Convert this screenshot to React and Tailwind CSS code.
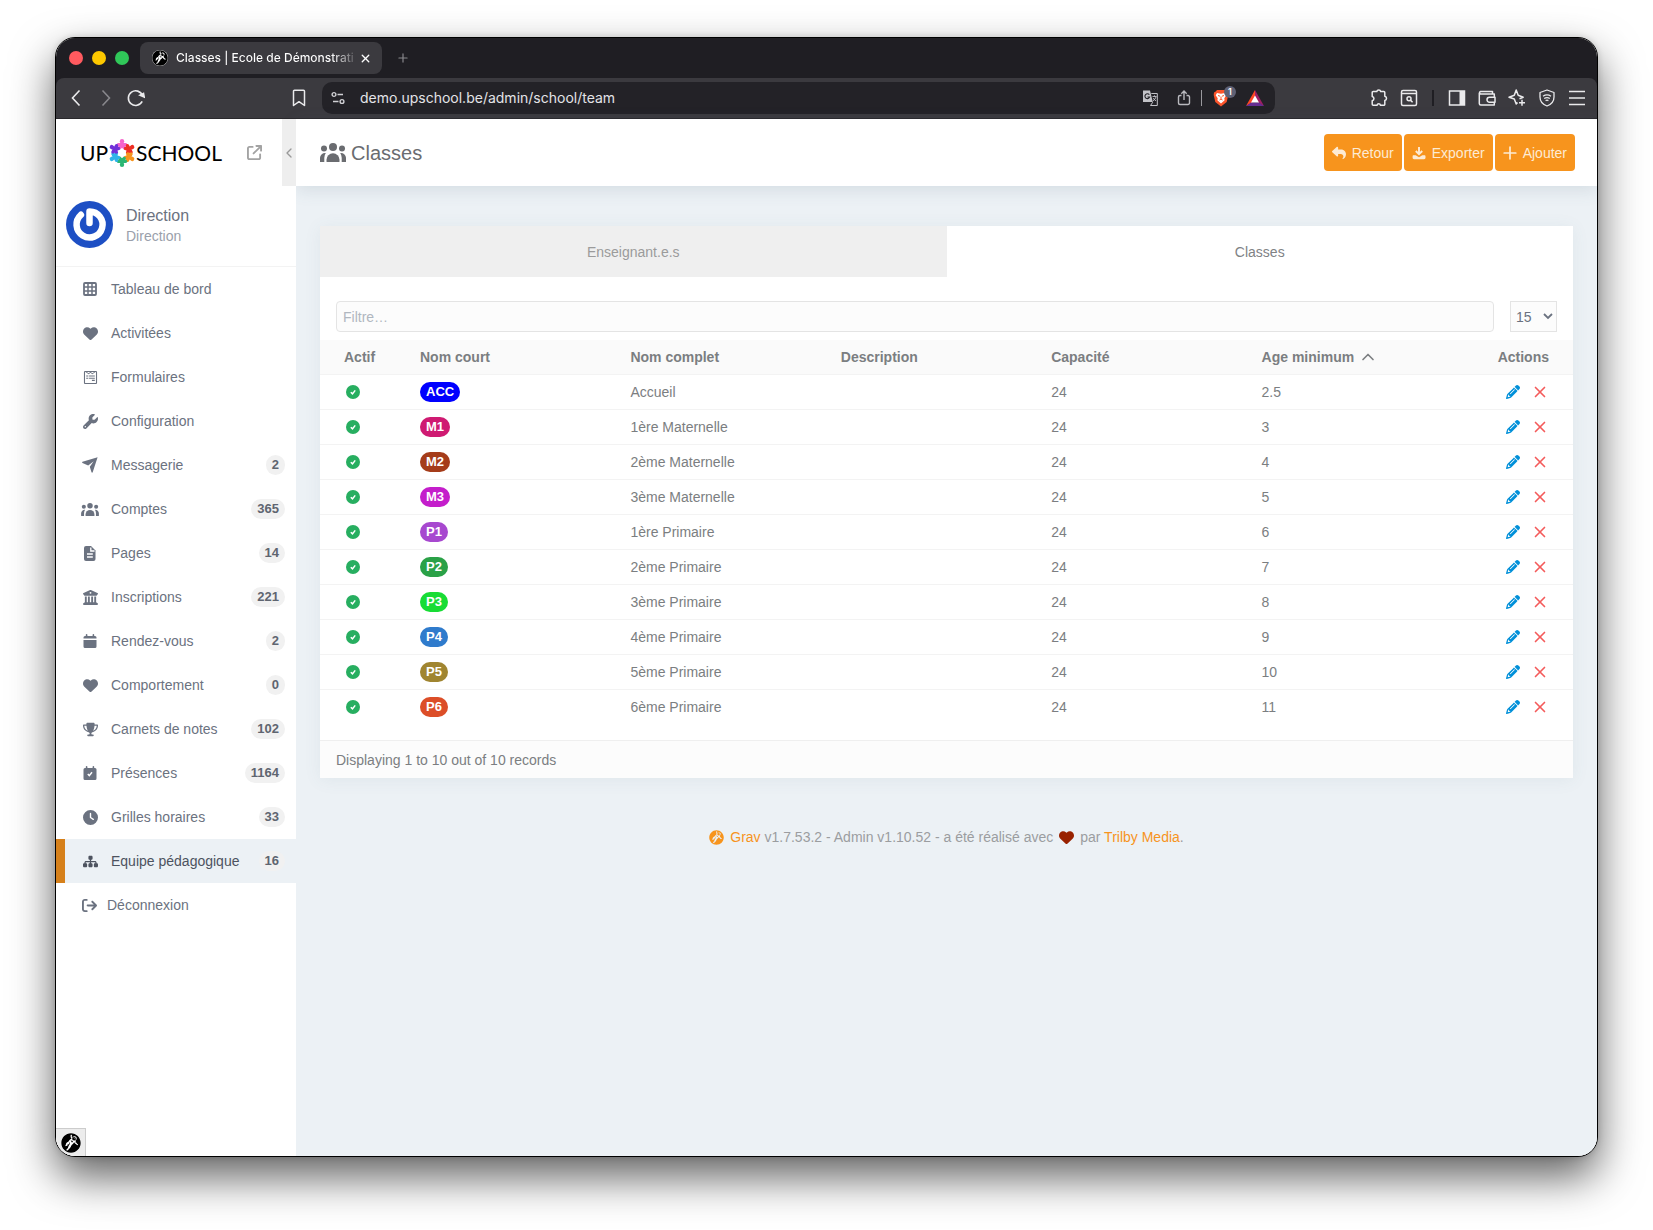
import {
  FaArrowRightFromBracket, FaArrowUpRightFromSquare, FaBuildingColumns, FaClock,
  FaGrav, FaHeart, FaPencil, FaReply, FaSitemap, FaTrophy, FaWpforms, FaWrench,
} from 'react-icons/fa6'
import { ChevronLeft, ChevronUp, Plus, X } from 'lucide-react'

const GridIcon = () => (
  <svg viewBox="0 0 14 14" className="size-3.5" fill="none" stroke="currentColor">
    <rect x="1" y="1" width="12" height="12" rx="1" strokeWidth="1.8" />
    <path d="M5 1v12M9 1v12M1 5h12M1 9h12" strokeWidth="1.5" />
  </svg>
)

const SendIcon = () => (
  <svg viewBox="0 0 16 16" className="size-4" fill="currentColor">
    <path d="M15.600.2.5 4.700c-.6.2-.6.900 0 1.200l5.700 2.600L11.700 4.200 7.800 9.700l1.700 5.600c.2.6 1 .6 1.200 0z" />
  </svg>
)

function GroupIcon({ className }) {
  return (
    <svg viewBox="0 0 26 19" className={className} fill="currentColor">
      <circle cx="13" cy="4" r="4" />
      <circle cx="4" cy="5.500" r="3" />
      <circle cx="22" cy="5.500" r="3" />
      <path d="M6.500 18.500v-1.700a6.500 6.500 0 0 1 13 0v1.700a.5.5 0 0 1-.5.500H7a.5.5 0 0 1-.5-.5z" />
      <path d="M0 18.500V15a5 5 0 0 1 5.800-5 8.500 8.500 0 0 0-1.500 5v4H.5a.5.5 0 0 1-.5-.5z" />
      <path d="M26 18.500V15a5 5 0 0 0-5.800-5 8.500 8.500 0 0 1 1.500 5v4h3.800a.5.5 0 0 0 .5-.5z" />
    </svg>
  )
}

const PageIcon = () => (
  <svg viewBox="0 0 12 15" className="h-[15px] w-3">
    <path d="M2 0h5l4.500 4.500V13a2 2 0 0 1-2 2H2a2 2 0 0 1-2-2V2a2 2 0 0 1 2-2z" fill="currentColor" />
    <path d="M6.800 1.500V5h3.700M3 8h5.800M3 11h5.800" fill="none" stroke="#fff" strokeWidth="1.3" />
  </svg>
)

const CalendarIcon = () => (
  <svg viewBox="0 0 14 14" className="size-3.5" fill="currentColor">
    <path d="M2.800.8a.8.8 0 0 1 1.600 0V2h5.200V.8a.8.8 0 0 1 1.600 0V2H12a1.500 1.500 0 0 1 1.500 1.500v1H.5v-1A1.500 1.500 0 0 1 2 2h.8z" />
    <path d="M.5 6h13v6.500A1.500 1.500 0 0 1 12 14H2a1.500 1.500 0 0 1-1.500-1.500z" />
  </svg>
)

const CalendarCheckIcon = () => (
  <svg viewBox="0 0 14 14" className="size-3.5">
    <path fill="currentColor" d="M2.800.8a.8.8 0 0 1 1.600 0V2h5.200V.8a.8.8 0 0 1 1.600 0V2H12a1.500 1.500 0 0 1 1.500 1.500v9A1.500 1.500 0 0 1 12 14H2a1.500 1.500 0 0 1-1.500-1.500v-9A1.500 1.500 0 0 1 2 2h.8z" />
    <path d="m4.800 8 1.500 1.600 2.700-3.400" fill="none" stroke="#fff" strokeWidth="1.5" />
  </svg>
)

const CheckIcon = () => (
  <svg viewBox="0 0 14 14" className="size-3.5" role="img" aria-label="Actif">
    <circle cx="7" cy="7" r="7" fill="#27ae60" />
    <path d="m4.800 7.200 1.700 1.700 2.700-3.500" fill="none" stroke="#fff" strokeWidth="1.5" />
  </svg>
)

const DownloadIcon = () => (
  <svg viewBox="0 0 14 14" className="size-3.5">
    <path d="M7 1v6.500M3.800 5 7 8.200 10.200 5" fill="none" stroke="currentColor" strokeWidth="1.900" />
    <path d="M1.500 9.200h2.200L7 11.200l3.300-2h2.200c.7 0 1 .5 1 1.200v1.400c0 .8-.6 1.400-1.400 1.400H2c-.8 0-1.400-.6-1.400-1.400v-1.400c0-.7.3-1.200.9-1.200z" fill="currentColor" />
  </svg>
)

const PlusIcon = () => (
  <svg viewBox="0 0 14 14" className="size-3.5" fill="none" stroke="currentColor" strokeWidth="1.700" strokeLinecap="round">
    <path d="M7 1.200v11.600M1.200 7h11.600" />
  </svg>
)

const navItems = [
  { label: 'Tableau de bord', icon: <GridIcon /> },
  { label: 'Activitées', icon: <FaHeart size={15} /> },
  { label: 'Formulaires', icon: <FaWpforms size={15} /> },
  { label: 'Configuration', icon: <FaWrench size={15} /> },
  { label: 'Messagerie', icon: <SendIcon />, count: 2 },
  { label: 'Comptes', icon: <GroupIcon className="h-[13px] w-[18px]" />, count: 365 },
  { label: 'Pages', icon: <PageIcon />, count: 14 },
  { label: 'Inscriptions', icon: <FaBuildingColumns size={15} />, count: 221 },
  { label: 'Rendez-vous', icon: <CalendarIcon />, count: 2 },
  { label: 'Comportement', icon: <FaHeart size={15} />, count: 0 },
  { label: 'Carnets de notes', icon: <FaTrophy size={15} />, count: 102 },
  { label: 'Présences', icon: <CalendarCheckIcon />, count: 1164 },
  { label: 'Grilles horaires', icon: <FaClock size={15} />, count: 33 },
  { label: 'Equipe pédagogique', icon: <FaSitemap size={15} />, count: 16, active: true },
]

const classes = [
  { code: 'ACC', color: 'bg-[#0000ff]', name: 'Accueil', age: '2.5' },
  { code: 'M1', color: 'bg-[#cf1a72]', name: '1ère Maternelle', age: '3' },
  { code: 'M2', color: 'bg-[#a53c1a]', name: '2ème Maternelle', age: '4' },
  { code: 'M3', color: 'bg-[#c41ecb]', name: '3ème Maternelle', age: '5' },
  { code: 'P1', color: 'bg-[#a748cf]', name: '1ère Primaire', age: '6' },
  { code: 'P2', color: 'bg-[#2aa147]', name: '2ème Primaire', age: '7' },
  { code: 'P3', color: 'bg-[#18dc35]', name: '3ème Primaire', age: '8' },
  { code: 'P4', color: 'bg-[#2f7bcc]', name: '4ème Primaire', age: '9' },
  { code: 'P5', color: 'bg-[#a08530]', name: '5ème Primaire', age: '10' },
  { code: 'P6', color: 'bg-[#dc4e28]', name: '6ème Primaire', age: '11' },
]

// logo petals, clockwise from the top
const petals = ['#f564cb', '#ee2e24', '#f7941d', '#2bb673', '#2fb4e9', '#7030d8']

function Logo() {
  return (
    <a href="#" className="flex items-center font-[Lato,sans-serif] text-[21px] leading-7 text-black">
      <span>UP</span>
      <svg viewBox="-14 -14 28 28" className="size-7">
        {petals.map((fill, i) => (
          <g key={fill} fill={fill} transform={`rotate(${i * 60})`}>
            <circle cx="0" cy="-11.700" r="2.200" />
            <path d="M-1.300-10.500h2.600l.5.500h2.100a1.600 1.600 0 0 1 .4 3.100l-.9.400.6 1.800L1.800-3.400 0-5.200l-1.800 1.800L-4-4.700l.6-1.800-.9-.4a1.600 1.600 0 0 1 .4-3.100h2.100z" />
          </g>
        ))}
      </svg>
      <span>SCHOOL</span>
    </a>
  )
}

function Avatar() {
  return (
    <svg viewBox="0 0 47 47" className="size-[47px]">
      <circle cx="23.500" cy="23.500" r="23.500" fill="#1d4fc4" />
      <path d="M23.500 22V10.500a13 13 0 1 1-8.600 3.300" fill="none" stroke="#fff" strokeWidth="6.500" strokeLinecap="round" strokeLinejoin="round" />
    </svg>
  )
}

function ToolButton({ label, children }) {
  return (
    <button type="button" aria-label={label} className="flex h-8 w-[30px] shrink-0 items-center justify-center">
      {children}
    </button>
  )
}

function BrowserTabs() {
  return (
    <div className="flex h-10 items-center bg-[#1f1e23] pl-[13px]">
      <div className="flex gap-[9px]">
        <span className="size-3.5 rounded-full bg-[#ff5a5f]" />
        <span className="size-3.5 rounded-full bg-[#fdc800]" />
        <span className="size-3.5 rounded-full bg-[#30c759]" />
      </div>
      <div className="ml-[11px] flex h-8 w-[242px] items-center rounded-lg bg-[#3b3a3f] pr-2.5 pl-3">
        <span className="flex size-4 shrink-0 items-center justify-center rounded-full bg-white">
          <FaGrav size={16} className="text-black" />
        </span>
        <span className="ml-2 flex-1 bg-linear-to-r from-white from-85% to-transparent bg-clip-text text-xs font-medium whitespace-nowrap text-transparent">
          Classes | Ecole de Démonstrati
        </span>
        <button type="button" aria-label="Fermer l'onglet" className="shrink-0">
          <X size={13} strokeWidth={2.500} className="text-white" />
        </button>
      </div>
      <button type="button" aria-label="Nouvel onglet" className="ml-3.5">
        <Plus size={14} strokeWidth={2} className="text-[#8a898e]" />
      </button>
    </div>
  )
}

function BrowserToolbar() {
  return (
    <div className="bg-[#1f1e23]">
      <div className="flex h-[41px] items-center rounded-t-lg border-b border-[#2a292d] bg-[#3b3a3f] pr-[5px] pl-[5px] text-[#eaeaec]">
        <ToolButton label="Précédent">
          <svg viewBox="0 0 18 18" className="size-[18px]" fill="none" stroke="currentColor" strokeWidth="1.600"><path d="M12.500 1.500 5.500 9l7 7.500" /></svg>
        </ToolButton>
        <ToolButton label="Suivant">
          <svg viewBox="0 0 18 18" className="size-[18px] text-[#88878c]" fill="none" stroke="currentColor" strokeWidth="1.600"><path d="m5.500 1.500 7 7.500-7 7.500" /></svg>
        </ToolButton>
        <ToolButton label="Recharger">
          <svg viewBox="0 0 18 18" className="size-[18px]" fill="none" stroke="currentColor" strokeWidth="1.600">
            <path d="M15.200 12.400A7.300 7.300 0 1 1 15.500 6.500" />
            <path d="M13 6.200 16.500 4.500 17.200 8z" fill="currentColor" />
          </svg>
        </ToolButton>
        <span className="w-[133px] shrink" />
        <ToolButton label="Favori">
          <svg viewBox="0 0 14 18" className="h-[18px] w-3.5" fill="none" stroke="currentColor" strokeWidth="1.500" strokeLinejoin="round">
            <path d="M1.500 2.200a1 1 0 0 1 1-1h9a1 1 0 0 1 1 1v14.300L7 12.700l-5.500 3.800z" />
          </svg>
        </ToolButton>

        <div className="ml-2 flex h-8 flex-1 items-center rounded-[10px] bg-[#232227] pr-[3px] pl-[9px]">
          <svg viewBox="0 0 14 14" className="size-3.5 shrink-0" fill="none" stroke="#d0d0d4" strokeWidth="1.400">
            <circle cx="3" cy="3.500" r="1.900" /><path d="M6.500 3.500H12" />
            <circle cx="11" cy="10.500" r="1.900" /><path d="M2 10.500h5.500" />
          </svg>
          <input aria-label="Adresse" readOnly defaultValue="demo.upschool.be/admin/school/team"
            className="ml-[15px] min-w-0 flex-1 bg-transparent text-sm text-[#e4e4e7] outline-none" />
          <button type="button" aria-label="Traduire" className="flex h-8 w-[34px] items-center justify-center">
            <svg viewBox="0 0 16 16" className="size-4">
              <path d="M1 .5h7l2.800 11.500H1z" fill="#c3c3c8" />
              <path d="M7.300 4.800A2.400 2.400 0 1 0 7.600 7H5.400" fill="none" stroke="#232227" strokeWidth="1.100" />
              <path d="M9.300 3.500h6v12H8.500l2.300-3.300" fill="none" stroke="#c3c3c8" />
              <path d="M10.500 6.500h4M12.500 5.300v1.200M14 6.500c-.3 2-1.500 3.300-3 4.300M11.300 8c.5 1.200 1.500 2.200 2.700 2.800" fill="none" stroke="#c3c3c8" strokeWidth=".9" />
            </svg>
          </button>
          <button type="button" aria-label="Partager" className="flex h-8 w-[34px] items-center justify-center">
            <svg viewBox="0 0 14 16" className="h-4 w-3.5" fill="none" stroke="#b9b9be" strokeWidth="1.400">
              <path d="M4.500 5.500H3A1.500 1.500 0 0 0 1.500 7v6A1.500 1.500 0 0 0 3 14.500h8a1.500 1.500 0 0 0 1.500-1.500V7A1.500 1.500 0 0 0 11 5.500H9.500M7 10V1.200M4.300 3.700 7 1l2.700 2.700" />
            </svg>
          </button>
          <span className="h-4 w-px bg-[#9a999e]" />
          <button type="button" aria-label="Brave Shields" className="relative ml-0.5 flex h-8 w-[34px] items-center justify-center">
            <svg viewBox="0 0 16 18" className="h-[18px] w-4">
              <path d="M4 1h8l1.300 1.400L15 3.500 15.300 6l-1.600 7L8 17.500 2.300 13 .7 6 1 3.500l1.700-1.100z" fill="#fb542b" />
              <path d="m4 4 4 .8L12 4l1.300 2.300-2 3 .3 2L8 14.500 4.400 11.300l.3-2-2-3z" fill="#fff" />
              <path d="m5 6.500 2 .7M11 6.500l-2 .7M8 7.500v2.300M6.500 11 8 10l1.500 1" fill="none" stroke="#fb542b" />
            </svg>
            <span className="absolute top-1 right-[2px] flex size-3 items-center justify-center rounded-full bg-[#5f6175] text-[9px] leading-3 font-semibold text-white">1</span>
          </button>
          <button type="button" aria-label="Brave Rewards" className="flex h-8 w-[34px] items-center justify-center">
            <svg viewBox="0 0 18 16" className="h-4 w-[18px]">
              <path d="M9 0 0 16l9-5z" fill="#ff4724" />
              <path d="m9 0 9 16-9-5z" fill="#9e1f63" />
              <path d="m0 16 5-3.500h8L18 16z" fill="#662d91" />
              <path d="m9 5.500 4 7H5z" fill="#fff" />
            </svg>
          </button>
        </div>

        <span className="w-[89px] shrink" />
        <ToolButton label="Extensions">
          <svg viewBox="0 0 18 18" className="size-[18px]" fill="none" stroke="currentColor" strokeWidth="1.500" strokeLinejoin="round">
            <path d="M2.200 3.500a1 1 0 0 1 1-1h3.600a2 2 0 0 1 3.900 0h3.100a1 1 0 0 1 1 1v3.700a2.200 2.200 0 0 1 0 4.300v3.700a1 1 0 0 1-1 1h-3.300a1.800 1.800 0 0 0-3.500 0H3.200a1 1 0 0 1-1-1v-3.500a2.200 2.200 0 0 0 0-4.300z" />
          </svg>
        </ToolButton>
        <ToolButton label="Rechercher dans les onglets">
          <svg viewBox="0 0 18 18" className="size-[18px]" fill="none" stroke="currentColor" strokeWidth="1.500">
            <rect x="1.500" y="1.500" width="15" height="15" rx="1.500" /><path d="M1.500 4.500h15" />
            <circle cx="9" cy="9.700" r="2" /><path d="m10.400 11.100 2.200 2.200" />
          </svg>
        </ToolButton>
        <span className="mx-2 h-4 w-0.5 bg-[#1f1e23]" />
        <ToolButton label="Panneau latéral">
          <svg viewBox="0 0 18 18" className="size-[18px]">
            <rect x="1.500" y="2" width="15" height="14" fill="none" stroke="currentColor" strokeWidth="1.500" />
            <path d="M11.500 2h5v14h-5z" fill="currentColor" />
          </svg>
        </ToolButton>
        <ToolButton label="Portefeuille">
          <svg viewBox="0 0 18 18" className="size-[18px]" fill="none" stroke="currentColor" strokeWidth="1.500" strokeLinejoin="round">
            <path d="M14.500 5V2.500h-12a1.300 1.300 0 0 0 0 2.500h13.800v3M1.300 3.700v10.800A1.500 1.500 0 0 0 2.800 16h13.500v-2.500" />
            <path d="M17 8.200h-5.500a2.300 2.300 0 0 0 0 5H17z" />
          </svg>
        </ToolButton>
        <ToolButton label="Leo">
          <svg viewBox="0 0 18 18" className="size-[18px]" fill="none" stroke="currentColor" strokeWidth="1.500" strokeLinejoin="round">
            <path d="M9.500 13.500 8.200 15 6.300 10 1 8.200l5.300-2L8.200 1l2 5.200 5 2-3.700 1.500" />
            <path d="M14 10.800v6M11 13.800h6" />
          </svg>
        </ToolButton>
        <ToolButton label="VPN">
          <svg viewBox="0 0 18 18" className="size-[18px]" fill="none" stroke="currentColor" strokeWidth="1.300" strokeLinejoin="round">
            <path d="m9 1 7 2.500V8c0 4.500-3 7.500-7 9-4-1.500-7-4.500-7-9V3.500z" />
            <path d="M5 7.200c2.500-1.700 5.500-1.700 8 0M6.200 9.500c1.700-1.100 3.900-1.100 5.600 0M7.600 11.600c.9-.6 1.900-.6 2.800 0" />
          </svg>
        </ToolButton>
        <ToolButton label="Menu">
          <svg viewBox="0 0 18 18" className="size-[18px]" fill="none" stroke="currentColor" strokeWidth="1.500"><path d="M1 2.500h16M1 9h16M1 15.500h16" /></svg>
        </ToolButton>
      </div>
    </div>
  )
}

function Sidebar() {
  return (
    <aside className="relative flex w-60 shrink-0 flex-col bg-white text-[#6b7280]">
      <div className="flex h-[67px] items-stretch">
        <div className="flex flex-1 items-center justify-between pr-5 pl-6">
          <Logo />
          <a href="#" aria-label="Voir le site" className="text-[#a3a3a3]"><FaArrowUpRightFromSquare size={15} /></a>
        </div>
        <button type="button" aria-label="Réduire le menu" className="flex w-3.5 items-center justify-center bg-[#eeeeee] text-[#999]">
          <ChevronLeft size={16} className="shrink-0" />
        </button>
      </div>
      <div className="flex h-[81px] items-center gap-[13px] border-b border-[#f3f3f3] px-2.5 pb-1">
        <Avatar />
        <div className="pt-1">
          <h4 className="text-base leading-5">Direction</h4>
          <h5 className="text-sm leading-5 text-[#9a9fab]">Direction</h5>
        </div>
      </div>
      <nav>
        <ul>
          {navItems.map(({ label, icon, count, active }) => (
            <li key={label}>
              <a href="#" aria-current={active ? 'page' : undefined}
                className={`flex h-11 items-center border-l-[9px] pr-[11px] pl-3.5 text-sm ${
                  active ? 'border-[#d6801a] bg-[#ecf1f5] text-[#4d535f]' : 'border-transparent'
                }`}>
                <span className="flex w-[22px] shrink-0 justify-center">{icon}</span>
                <span className="ml-2.5 flex-1 whitespace-nowrap">{label}</span>
                {count !== undefined && (
                  <span className="h-5 rounded-full bg-[#f1f1f1] px-1.5 text-[13px] leading-5 font-bold text-[#5f6570]">{count}</span>
                )}
              </a>
            </li>
          ))}
          <li>
            <a href="#" className="flex h-11 items-center pl-[26px] text-sm">
              <FaArrowRightFromBracket size={15} />
              <span className="ml-2.5">Déconnexion</span>
            </a>
          </li>
        </ul>
      </nav>
      <div className="absolute bottom-0 left-0 flex h-7 w-[30px] items-center justify-center border-t border-r border-[#ccc] bg-[#ececec]">
        <span className="flex size-5 items-center justify-center rounded-full bg-white">
          <FaGrav size={20} className="text-black" />
        </span>
      </div>
    </aside>
  )
}

function ActionButton({ icon, children }) {
  return (
    <button type="button" className="flex h-[37px] items-center gap-1.5 rounded bg-[#f7941d] px-2 text-sm text-[#fdebd4]">
      {icon}
      {children}
    </button>
  )
}

function ClassTable() {
  return (
    <table className="w-full table-fixed border-collapse text-left text-sm text-[#7b7e81]">
      <thead className="bg-[#fafafa]">
        <tr className="h-[34px] border-b border-[#f3f3f3]">
          <th className="w-[92px] pl-6">Actif</th>
          <th className="pl-2">Nom court</th>
          <th className="pl-2">Nom complet</th>
          <th className="pl-2">Description</th>
          <th className="pl-2">Capacité</th>
          <th className="pl-2">
            <button type="button" className="flex items-center gap-1 font-bold">
              Age minimum <ChevronUp size={20} strokeWidth={2} className="-my-1" />
            </button>
          </th>
          <th className="w-[109px] pr-6 text-right">Actions</th>
        </tr>
      </thead>
      <tbody>
        {classes.map((c) => (
          <tr key={c.code} className="h-[35px] border-b border-[#f3f3f3] last:border-0">
            <td className="pl-[26px]"><CheckIcon /></td>
            <td className="pl-2">
              <span className={`inline-block h-5 rounded-full px-1.5 align-middle text-[13px] leading-5 font-bold text-white ${c.color}`}>{c.code}</span>
            </td>
            <td className="pl-2">{c.name}</td>
            <td className="pl-2" />
            <td className="pl-2">24</td>
            <td className="pl-2">{c.age}</td>
            <td className="pr-6">
              <div className="flex items-center justify-end gap-[11px]">
                <button type="button" aria-label={`Modifier ${c.name}`} className="text-[#0090d9]"><FaPencil size={14} /></button>
                <button type="button" aria-label={`Supprimer ${c.name}`} className="text-[#f45b5b]"><X size={18} strokeWidth={2.200} /></button>
              </div>
            </td>
          </tr>
        ))}
      </tbody>
    </table>
  )
}

function Content() {
  return (
    <div className="flex min-w-0 flex-1 flex-col bg-[#ecf1f5]">
      <header className="flex h-[67px] items-center justify-between bg-white pr-[22px] pl-6 shadow-[0_4px_16px_rgba(80,110,130,0.15)]">
        <h1 className="flex items-center gap-[5px] text-[20px] text-[#6a6c70]">
          <GroupIcon className="h-[19px] w-[26px]" />
          Classes
        </h1>
        <div className="flex gap-0.5">
          <ActionButton icon={<FaReply size={14} />}>Retour</ActionButton>
          <ActionButton icon={<DownloadIcon />}>Exporter</ActionButton>
          <ActionButton icon={<PlusIcon />}>Ajouter</ActionButton>
        </div>
      </header>

      <main className="px-6 pt-10">
        <section className="bg-white shadow-[0_2px_16px_rgba(80,110,130,0.08)]">
          <div role="tablist" className="grid h-[51px] grid-cols-2 text-sm">
            <button type="button" role="tab" aria-selected="false" className="bg-[#efefef] text-[#9b9b9b]">Enseignant.e.s</button>
            <button type="button" role="tab" aria-selected="true" className="text-[#808285]">Classes</button>
          </div>
          <div className="flex gap-4 px-4 pt-6 pb-2">
            <input aria-label="Filtre" placeholder="Filtre…"
              className="h-[31px] min-w-0 flex-1 rounded-sm border border-[#e4e4e4] bg-[#fcfcfc] px-1.5 text-sm placeholder:text-[#b0b7c0]" />
            <div className="relative w-[47px]">
              <select aria-label="Lignes par page" defaultValue="15"
                className="h-[31px] w-full appearance-none border border-[#e4e4e4] bg-[#fcfcfc] pl-[5px] text-sm text-[#6b7280]">
                <option>15</option>
                <option>50</option>
                <option>100</option>
              </select>
              <svg viewBox="0 0 10 10" className="pointer-events-none absolute top-[10px] right-1 size-2.5" fill="none" stroke="#6b7280" strokeWidth="1.800">
                <path d="m1 3 4 4 4-4" />
              </svg>
            </div>
          </div>
          <ClassTable />
          <div className="mt-4 flex h-[38px] items-center border-t border-[#efefef] bg-[#fcfcfc] px-4 text-sm text-[#7b7e81]">
            Displaying 1 to 10 out of 10 records
          </div>
        </section>

        <footer className="flex items-center justify-center py-12 text-sm leading-[22px] text-[#9b9da0]">
          <FaGrav size={15} className="mr-1.5 text-[#f7941d]" />
          <p>
            <a href="#" className="text-[#f7941d]">Grav</a> v1.7.53.2 - Admin v1.10.52 - a été réalisé avec
          </p>
          <FaHeart size={15} className="mx-1.5 text-[#992200]" />
          <p>
            par <a href="#" className="text-[#f7941d]">Trilby Media</a>.
          </p>
        </footer>
      </main>
    </div>
  )
}

export default function App() {
  return (
    <div className="flex min-h-screen flex-col bg-white px-[55px] pt-[37px] pb-[73px]">
      <div className="flex flex-1 flex-col overflow-hidden rounded-[20px] border border-black bg-white shadow-[0_20px_44px_rgba(0,0,0,0.62),0_0_6px_rgba(0,0,0,0.15)]">
        <div className="border-t border-[#69686c] font-[Inter,sans-serif]">
          <div className="-mt-px">
            <BrowserTabs />
          </div>
          <BrowserToolbar />
        </div>
        <div className="flex flex-1 font-['Liberation_Sans',Arial,sans-serif]">
          <Sidebar />
          <Content />
        </div>
      </div>
    </div>
  )
}
